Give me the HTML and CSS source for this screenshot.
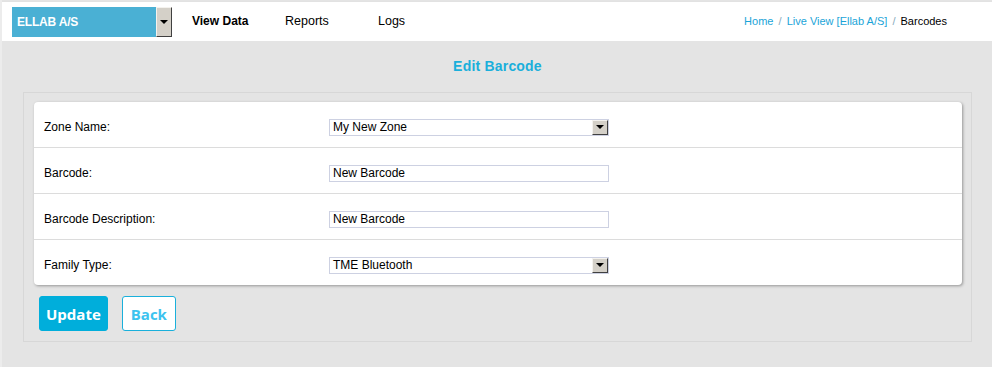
FILE: index.html
```html
<!DOCTYPE html>
<html lang="en">
<head>
  <meta charset="UTF-8" />
  <title>Edit Barcode</title>
  <link rel="stylesheet" href="styles.css">
</head>
<body>
  <div class="header">
    <div class="company-select">
      <span>ELLAB A/S</span>
      <span class="drop-btn"><i class="arrow"></i></span>
    </div>
    <div class="nav">
      <a class="active" href="#">View Data</a>
      <a href="#">Reports</a>
      <a href="#">Logs</a>
    </div>
    <div class="breadcrumb">
      <a href="#">Home</a>
      <span class="sep">/</span>
      <a href="#">Live View [Ellab A/S]</a>
      <span class="sep">/</span>
      <span class="current">Barcodes</span>
    </div>
  </div>

  <div class="page">
    <h2 class="title">Edit Barcode</h2>

    <div class="panel">
      <div class="card">
        <div class="row">
          <label>Zone Name:</label>
          <div class="field select">
            <span>My New Zone</span>
            <span class="drop-btn small"><i class="arrow"></i></span>
          </div>
        </div>
        <div class="row">
          <label>Barcode:</label>
          <div class="field"><span>New Barcode</span></div>
        </div>
        <div class="row">
          <label>Barcode Description:</label>
          <div class="field"><span>New Barcode</span></div>
        </div>
        <div class="row">
          <label>Family Type:</label>
          <div class="field select">
            <span>TME Bluetooth</span>
            <span class="drop-btn small"><i class="arrow"></i></span>
          </div>
        </div>
      </div>

      <div class="actions">
        <button class="btn btn-primary">Update</button>
        <button class="btn btn-outline">Back</button>
      </div>
    </div>
  </div>
</body>
</html>
```

FILE: styles.css
```css
body {
  margin: 0;
  padding: 0;
  font-family: 'Liberation Sans', Arial, sans-serif;
  background: #e4e4e4;
  color: #000;
  height: 367px;
  overflow: hidden;
  border-left: 2px solid #ececec;
  box-sizing: border-box;
}

.header {
  display: flex;
  align-items: center;
  height: 39px;
  margin-top: 1px;
  padding: 0 0 0 10px;
  background: #fff;
  border-top: 1px solid #e2e2e2;
}

.company-select {
  display: flex;
  align-items: center;
  justify-content: space-between;
  width: 160px;
  height: 30px;
  margin-top: 1px;
  background: #4ab0d4;
  color: #fff;
  font-weight: bold;
  font-size: 12px;
  letter-spacing: -0.2px;
  box-sizing: border-box;
  padding-left: 5px;
}

.drop-btn {
  display: flex;
  align-items: center;
  justify-content: center;
  width: 16px;
  height: 30px;
  box-sizing: border-box;
  background: #d4d0c8;
  border-top: 1px solid #f4f2ee;
  border-left: 1px solid #f4f2ee;
  border-right: 1px solid #404040;
  border-bottom: 1px solid #404040;
}

.drop-btn.small {
  height: 15px;
  width: 16px;
}

.arrow {
  width: 0;
  height: 0;
  border-left: 4px solid transparent;
  border-right: 4px solid transparent;
  border-top: 4px solid #000;
}

.nav {
  display: flex;
  margin-left: 20px;
  margin-top: -1px;
}

.nav a {
  color: #000;
  text-decoration: none;
  font-size: 12.5px;
  width: 93px;
}

.nav a.active {
  font-weight: bold;
  font-size: 12px;
}

.breadcrumb {
  margin-left: auto;
  margin-right: 45px;
  margin-top: -1px;
  font-size: 11px;
}

.breadcrumb a {
  color: #1ba4d8;
  text-decoration: none;
}

.breadcrumb .sep {
  color: #8ab;
  margin: 0 2px;
}

.page {
  padding: 0 20px 0 21px;
}

.title {
  margin: 17px 0 0;
  text-align: center;
  font-size: 14px;
  letter-spacing: 0.2px;
  font-weight: bold;
  color: #1aafdb;
  height: 34px;
}

.panel {
  border: 1px solid #d7d7d7;
  padding: 9px 9px 10px 10px;
}

.card {
  background: #fff;
  border-radius: 4px;
  box-shadow: 1px 1px 3px rgba(0, 0, 0, 0.35);
}

.row {
  display: flex;
  align-items: center;
  height: 40px;
  padding-top: 5px;
  border-bottom: 1px solid #dcdcdc;
  padding-left: 10px;
  font-size: 12px;
}

.row:last-child {
  border-bottom: none;
}

.row label {
  width: 285px;
}

.field {
  display: flex;
  align-items: center;
  justify-content: space-between;
  width: 280px;
  height: 17px;
  box-sizing: border-box;
  border: 1px solid #cdd1e2;
  padding-left: 3px;
  font-size: 12px;
}

.field.select {
  padding-right: 0;
}

.actions {
  display: flex;
  gap: 14px;
  margin-top: 11px;
  padding-left: 5px;
}

.btn {
  font-family: 'Open Sans', sans-serif;
  font-weight: bold;
  font-size: 15px;
  height: 35px;
  border-radius: 3px;
  padding: 0 8px;
  cursor: pointer;
}

.btn-primary {
  background: #00aedb;
  border: 1px solid #00aedb;
  color: #fff;
  padding: 0 6px;
}

.btn-outline {
  background: #fff;
  border: 1px solid #1ab0db;
  color: #3cc3ef;
}
```
